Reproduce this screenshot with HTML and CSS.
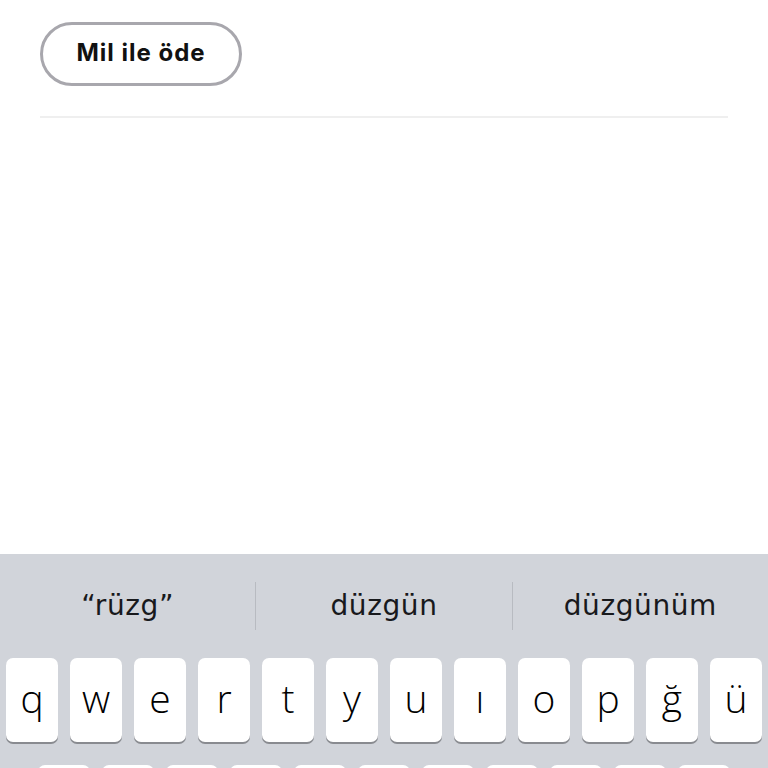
FILE: index.html
```html
<!DOCTYPE html>
<html lang="tr">
<head>
<meta charset="utf-8">
<link rel="stylesheet" href="styles.css">
</head>
<body>
<div class="screen">
  <main class="content">
    <button class="pill">Mil ile öde</button>
    <div class="rule"></div>
  </main>
  <section class="keyboard">
    <div class="suggestions">
      <div class="sugg">“rüzg”</div>
      <div class="sep"></div>
      <div class="sugg">düzgün</div>
      <div class="sep"></div>
      <div class="sugg">düzgünüm</div>
    </div>
    <div class="row">
      <div class="key">q</div><div class="key">w</div><div class="key">e</div><div class="key">r</div><div class="key">t</div><div class="key">y</div><div class="key">u</div><div class="key">ı</div><div class="key">o</div><div class="key">p</div><div class="key">ğ</div><div class="key">ü</div>
    </div>
    <div class="row row2">
      <div class="key"></div><div class="key"></div><div class="key"></div><div class="key"></div><div class="key"></div><div class="key"></div><div class="key"></div><div class="key"></div><div class="key"></div><div class="key"></div><div class="key"></div>
    </div>
  </section>
</div>
</body>
</html>
```
FILE: styles.css
```css
html, body {
  margin: 0;
  padding: 0;
  background: #ffffff;
}
body {
  width: 768px;
  height: 768px;
  overflow: hidden;
}
.screen {
  display: flex;
  flex-direction: column;
  height: 768px;
}
.content {
  flex: 1;
  padding: 22px 40px 0 40px;
}
.pill {
  display: block;
  box-sizing: border-box;
  width: 202px;
  height: 64px;
  border: 3px solid #a8a7ad;
  border-radius: 32px;
  background: #ffffff;
  font-family: "Inter", "Open Sans", sans-serif;
  font-weight: 700;
  font-size: 24px;
  color: #111111;
  padding: 0 0 3px 0;
  letter-spacing: 1px;
}
.rule {
  margin-top: 30px;
  height: 2px;
  background: #efefef;
}
.keyboard {
  height: 214px;
  flex: none;
  background: #d1d4da;
  overflow: hidden;
}
.suggestions {
  display: flex;
  align-items: center;
  height: 104px;
}
.sugg {
  flex: 1;
  text-align: center;
  font-family: "DejaVu Sans", sans-serif;
  font-size: 28px;
  letter-spacing: 0.6px;
  color: #18191c;
  padding-bottom: 2px;
}
.sep {
  width: 1px;
  height: 48px;
  background: #b8bbc1;
}
.row {
  display: flex;
  justify-content: center;
  gap: 12px;
  height: 84px;
  margin-bottom: 23px;
}
.key {
  width: 52px;
  height: 84px;
  background: #ffffff;
  border-radius: 7px;
  box-shadow: 0 2px 0 #898b90;
  display: flex;
  align-items: center;
  justify-content: center;
  font-family: "Open Sans", sans-serif;
  font-weight: 300;
  font-size: 39px;
  color: #000000;
  padding-bottom: 6px;
  box-sizing: border-box;
}
```
